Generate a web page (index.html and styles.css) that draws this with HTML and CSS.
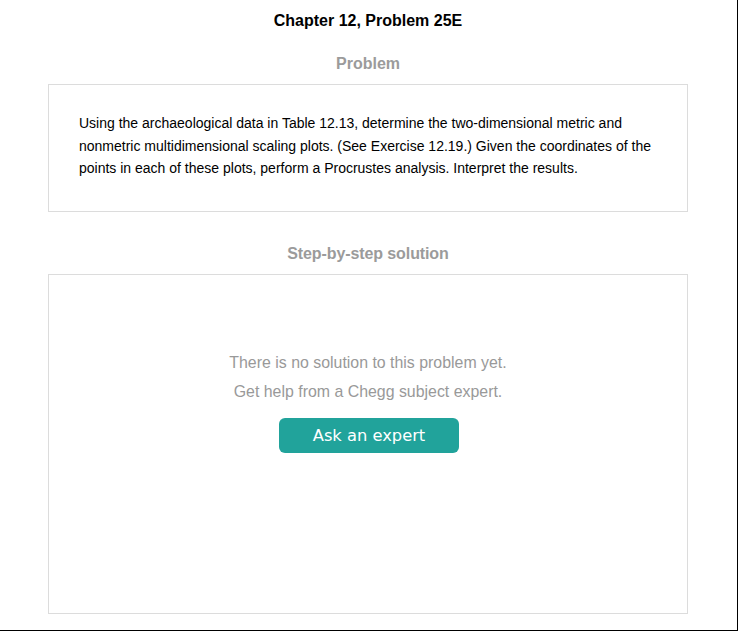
FILE: index.html
```html
<!DOCTYPE html>
<html>
<head>
<meta charset="utf-8">
<link rel="stylesheet" href="styles.css">
</head>
<body>
<div class="page">
  <h1 class="title">Chapter 12, Problem 25E</h1>
  <h2 class="section-head">Problem</h2>
  <div class="card problem">
    <p>Using the archaeological data in Table 12.13, determine the two-dimensional metric and nonmetric multidimensional scaling plots. (See Exercise 12.19.) Given the coordinates of the points in each of these plots, perform a Procrustes analysis. Interpret the results.</p>
  </div>
  <h2 class="section-head solution-head">Step-by-step solution</h2>
  <div class="card solution">
    <p class="empty">There is no solution to this problem yet.</p>
    <p class="empty">Get help from a Chegg subject expert.</p>
    <button class="ask">Ask an expert</button>
  </div>
</div>
</body>
</html>
```
FILE: styles.css
```css
html, body {
  margin: 0;
  padding: 0;
  background: #fff;
}
.page {
  box-sizing: border-box;
  width: 738px;
  height: 631px;
  border-right: 1px solid #000;
  border-bottom: 1px solid #000;
  padding: 0 49px 0 48px;
  font-family: "Liberation Sans", Arial, sans-serif;
  display: flex;
  flex-direction: column;
}
.title {
  margin: 11px 0 0;
  font-size: 16px;
  line-height: 20px;
  font-weight: bold;
  text-align: center;
  color: #000;
}
.section-head {
  margin: 0;
  font-size: 16px;
  line-height: 20px;
  font-weight: bold;
  text-align: center;
  color: #9b9b9b;
}
.title + .section-head {
  margin-top: 23px;
  margin-bottom: 10px;
}
.card {
  border: 1px solid #dcdcdc;
  box-sizing: border-box;
}
.problem {
  height: 128px;
  padding: 27px 29px 0 30px;
}
.problem p {
  margin: 0;
  font-size: 14px;
  line-height: 22.5px;
  color: #000;
}
.solution-head {
  margin-top: 32px;
  margin-bottom: 10px;
  letter-spacing: -0.1px;
}
.solution {
  height: 340px;
  display: flex;
  flex-direction: column;
  align-items: center;
  padding-top: 73px;
}
.empty {
  margin: 0;
  font-size: 15.9px;
  line-height: 29px;
  color: #999;
}
.ask {
  margin: 12px 0 0 2px;
  width: 180px;
  height: 35px;
  border: none;
  border-radius: 6px;
  background: #21a39b;
  color: #fff;
  font-family: "DejaVu Sans", Verdana, sans-serif;
  font-size: 16.3px;
  padding: 0;
}
```
